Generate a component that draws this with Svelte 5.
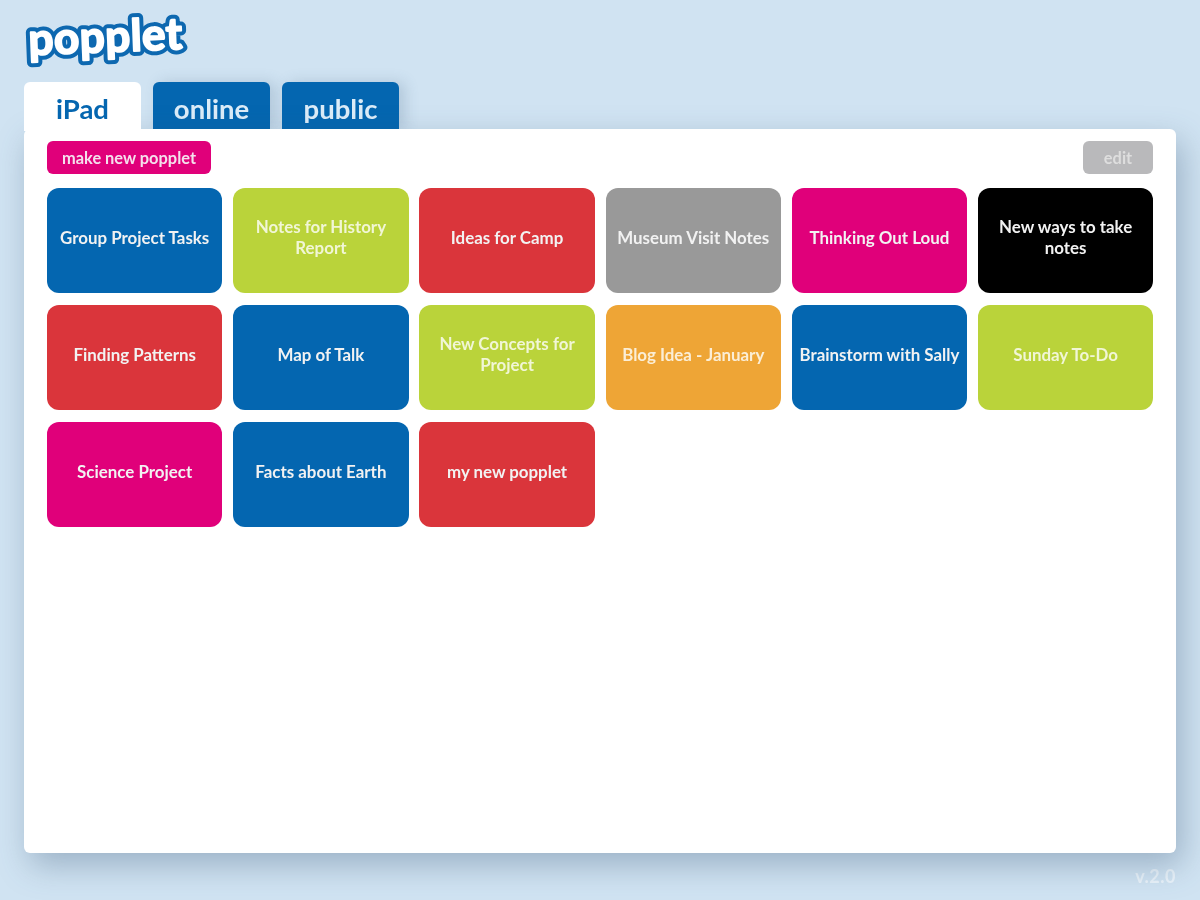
<script lang="ts">
  const tabs = [
    { label: "iPad", active: true },
    { label: "online", active: false },
    { label: "public", active: false },
  ];

  const popplets = [
    { title: "Group Project Tasks", color: "blue" },
    { title: "Notes for History Report", color: "green" },
    { title: "Ideas for Camp", color: "red" },
    { title: "Museum Visit Notes", color: "gray" },
    { title: "Thinking Out Loud", color: "pink" },
    { title: "New ways to take notes", color: "black" },
    { title: "Finding Patterns", color: "red" },
    { title: "Map of Talk", color: "blue" },
    { title: "New Concepts for Project", color: "green" },
    { title: "Blog Idea - January", color: "orange" },
    { title: "Brainstorm with Sally", color: "blue" },
    { title: "Sunday To-Do", color: "green" },
    { title: "Science Project", color: "pink" },
    { title: "Facts about Earth", color: "blue" },
    { title: "my new popplet", color: "red" },
  ];
</script>

<div class="page">
  <header class="logo-row">
    <svg class="logo" width="180" height="74" viewBox="0 0 180 74">
      <g transform="rotate(-2.2 6 52)">
        <text class="logo-outline" x="9" y="51" aria-hidden="true">popplet</text>
        <text class="logo-fill" x="9" y="51">popplet</text>
      </g>
    </svg>
  </header>

  <nav class="tabs">
    {#each tabs as tab}
      <div class="tab" class:active={tab.active}>{tab.label}</div>
    {/each}
  </nav>

  <main class="panel">
    <div class="toolbar">
      <button class="make">make new popplet</button>
      <button class="edit">edit</button>
    </div>
    <div class="grid">
      {#each popplets as p}
        <div class="card {p.color}"><span>{p.title}</span></div>
      {/each}
    </div>
  </main>

  <footer class="version">v.2.0</footer>
</div>

<style>
  :global(body) {
    margin: 0;
    background: #d0e3f2;
  }

  .page {
    width: 1200px;
    height: 900px;
    box-sizing: border-box;
    padding: 0 24px;
    display: flex;
    flex-direction: column;
    overflow: hidden;
    font-family: Lato, "Open Sans", sans-serif;
    font-weight: 700;
    background: #d0e3f2;
    filter: blur(0.45px);
  }

  .logo-row {
    height: 82px;
    flex: none;
  }

  .logo {
    display: block;
    margin: 4px 0 0 -4px;
  }

  .logo text {
    font-family: Lato, sans-serif;
    font-weight: 700;
    font-size: 44px;
    letter-spacing: 0.5px;
    stroke-linejoin: round;
    stroke-linecap: round;
  }

  .logo-outline {
    fill: #0d68b0;
    stroke: #0d68b0;
    stroke-width: 10px;
  }

  .logo-fill {
    fill: #fff;
    stroke: #fff;
    stroke-width: 2px;
  }

  .tabs {
    display: flex;
    gap: 12px;
    height: 47px;
    flex: none;
  }

  .tab {
    width: 117px;
    height: 47px;
    border-radius: 6px 6px 0 0;
    background: #0466b0;
    color: #dcecf8;
    font-size: 27.5px;
    line-height: 53px;
    text-align: center;
    box-shadow: 6px 0 14px rgba(70, 100, 130, 0.22);
  }

  .tab.active {
    background: #fff;
    color: #0466b0;
    height: 49px;
    position: relative;
    z-index: 2;
    box-shadow: none;
  }

  .panel {
    height: 724px;
    flex: none;
    box-sizing: border-box;
    padding: 12px 23px;
    background: #fff;
    border-radius: 6px;
    position: relative;
    z-index: 1;
    box-shadow: 6px 12px 32px rgba(60, 90, 120, 0.36);
  }

  .toolbar {
    display: flex;
    justify-content: space-between;
    height: 33px;
    margin-bottom: 14px;
  }

  button {
    border: none;
    padding: 0;
    height: 33px;
    border-radius: 6px;
    color: #f4e0ec;
    font: inherit;
    font-size: 16.4px;
  }

  .make {
    width: 164px;
    background: #e0007a;
  }

  .edit {
    width: 70px;
    background: #b9b9bb;
    color: #dedede;
  }

  .grid {
    display: grid;
    grid-template-columns: repeat(6, 175.4px);
    grid-auto-rows: 105px;
    column-gap: 10.8px;
    row-gap: 12px;
  }

  .card {
    display: flex;
    align-items: center;
    justify-content: center;
    padding: 0 4px 7px;
    border-radius: 12px;
    font-size: 16.9px;
    line-height: 21px;
    text-align: center;
    color: #f2f2f2;
  }

  .blue { background: #0466b0; }
  .green { background: #bad33a; color: #f1f6d6; }
  .red { background: #da353b; }
  .gray { background: #999; }
  .pink { background: #e0007a; }
  .black { background: #000; }
  .orange { background: #eea536; color: #fbeed6; }

  .version {
    margin-top: 14px;
    text-align: right;
    color: #eaf3fa;
    font-size: 18px;
    letter-spacing: 0.5px;
    line-height: 18px;
  }
</style>
